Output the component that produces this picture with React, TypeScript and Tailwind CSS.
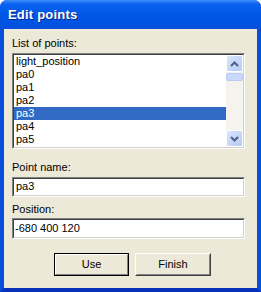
import { FC } from 'react'

const items = ['light_position', 'pa0', 'pa1', 'pa2', 'pa3', 'pa4', 'pa5']

const Chevron: FC<{ down?: boolean }> = ({ down }) => (
  <svg width="9" height="6" viewBox="0 0 9 6" className={down ? 'rotate-180' : ''}>
    <path d="M1 5 L4.5 1.5 L8 5" fill="none" stroke="#4d6185" strokeWidth="2" />
  </svg>
)

const ScrollButton: FC<{ down?: boolean }> = ({ down }) => (
  <div className="flex h-[17px] w-[17px] items-center justify-center rounded-[2px] border border-white bg-gradient-to-br from-[#dbe6fd] to-[#b5c9f6]">
    <Chevron down={down} />
  </div>
)

const Sunken: FC<{ children: React.ReactNode; className?: string }> = ({ children, className }) => (
  <div className={`border border-t-[#808080] border-l-[#808080] border-b-white border-r-white ${className ?? ''}`}>
    <div className="h-full border border-t-[#404040] border-l-[#404040] border-b-[#d4d0c8] border-r-[#d4d0c8] bg-white">
      {children}
    </div>
  </div>
)

const Label: FC<{ text: string; className?: string }> = ({ text, className }) => (
  <div className={`h-[13px] text-[11px] leading-[13px] text-black ${className ?? ''}`}>{text}</div>
)

const App: FC = () => {
  return (
    <div className="flex h-[292px] w-[261px] flex-col overflow-hidden rounded-t-[7px] bg-[#0a4fdb] font-['Liberation_Sans',sans-serif]">
      <div className="flex h-[29px] items-center bg-[linear-gradient(to_bottom,#3d8ef9_0px,#0a62f0_4px,#0058e8_14px,#0053e1_24px,#0a4fdb_29px)] pl-[8px]">
        <span className="text-[13px] font-bold tracking-[0.2px] text-white [text-shadow:1px_1px_0_#0a2a8a]">Edit points</span>
      </div>
      <div className="flex flex-1 border-x-4 border-b-4 border-x-[#0a4fdb] border-b-[#0831b9]">
        <div className="flex flex-1 flex-col bg-[#ece9d8] pl-[8px]">
          <Label text="List of points:" className="mt-[8px]" />
          <Sunken className="mt-[3px] h-[96px] w-[233px]">
            <div className="flex h-full">
              <div className="flex flex-1 flex-col pt-[0px]">
                {items.map((it) => (
                  <div
                    key={it}
                    className={`h-[13px] pl-[2px] text-[11px] leading-[13px] ${
                      it === 'pa3' ? 'bg-[#316ac5] text-white' : 'text-black'
                    }`}
                  >
                    {it}
                  </div>
                ))}
              </div>
              <div className="flex w-[17px] flex-col bg-[#f4f3ee]">
                <ScrollButton />
                <div className="mt-[1px] h-[8px] w-[17px] rounded-[2px] border border-[#b8caf5] bg-[#c9d8fc]" />
                <div className="flex-1" />
                <ScrollButton down />
              </div>
            </div>
          </Sunken>
          <Label text="Point name:" className="mt-[12px]" />
          <Sunken className="mt-[3px] h-[20px] w-[233px]">
            <div className="pl-[2px] text-[11px] leading-[15px] text-black">pa3</div>
          </Sunken>
          <Label text="Position:" className="mt-[6px]" />
          <Sunken className="mt-[2px] h-[21px] w-[233px]">
            <div className="pl-[1px] text-[11px] leading-[16px] text-black">-680 400 120</div>
          </Sunken>
          <div className="mt-[14px] flex w-[245px] justify-center gap-[6px] pr-[4px]">
            <div className="h-[23px] w-[75px] border border-black">
              <div className="flex h-full items-center justify-center border border-t-white border-l-white border-b-[#808080] border-r-[#808080] text-[11px] text-black">
                Use
              </div>
            </div>
            <div className="h-[23px] w-[76px] border border-t-white border-l-white border-b-[#404040] border-r-[#404040]">
              <div className="flex h-full items-center justify-center border border-t-[#ece9d8] border-l-[#ece9d8] border-b-[#808080] border-r-[#808080] text-[11px] text-black">
                Finish
              </div>
            </div>
          </div>
        </div>
      </div>
    </div>
  )
}

export default App
